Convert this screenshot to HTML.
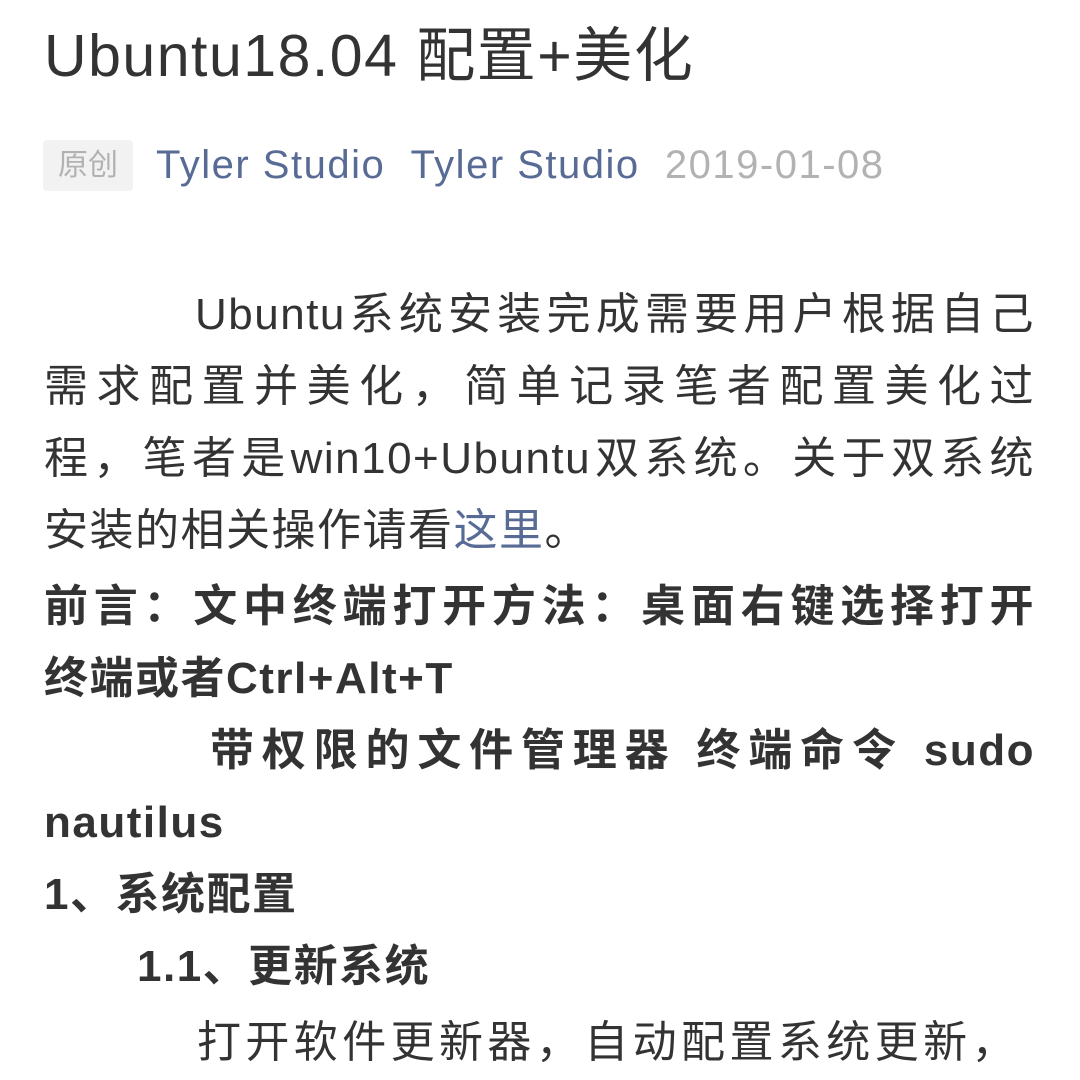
<!DOCTYPE html>
<html><head><meta charset="utf-8"><style>
html,body{margin:0;padding:0;background:#fff;width:1080px;height:1080px;overflow:hidden}
body{font-family:"Liberation Sans","Noto Sans CJK SC",sans-serif;color:#333}
.l{position:absolute;left:44px;width:991px;height:72px;line-height:72px;font-size:44px;white-space:nowrap;text-align:justify;text-align-last:justify;letter-spacing:1.5px}
.n{text-align-last:left}
.b{font-weight:bold}
a{color:#576b95;text-decoration:none}
</style></head><body>
<div style="position:absolute;left:44px;top:20px;font-size:59px;line-height:72px;color:#333;letter-spacing:1.5px;white-space:nowrap">Ubuntu18.04 配置+美化</div>
<div style="position:absolute;left:43px;top:140px;width:90px;height:51px;background:#f2f2f2;border-radius:4px;color:#b2b2b2;font-size:30px;line-height:51px;text-align:center">原创</div>
<div style="position:absolute;left:156px;top:140px;font-size:40px;letter-spacing:1.5px;line-height:51px;white-space:nowrap"><span style="color:#576b95">Tyler Studio</span>&nbsp;&nbsp;<span style="color:#576b95">Tyler Studio</span>&nbsp;&nbsp;<span style="color:#b2b2b2">2019-01-08</span></div>
<div class="l" style="top:279px;left:195px;width:840px">Ubuntu系统安装完成需要用户根据自己</div>
<div class="l" style="top:351px">需求配置并美化，简单记录笔者配置美化过</div>
<div class="l" style="top:423px">程，笔者是win10+Ubuntu双系统。关于双系统</div>
<div class="l n" style="top:495px">安装的相关操作请看<a>这里</a>。</div>
<div class="l b" style="top:571px">前言：文中终端打开方法：桌面右键选择打开</div>
<div class="l b n" style="top:643px">终端或者Ctrl+Alt+T</div>
<div class="l b" style="top:715px;left:210px;width:825px">带权限的文件管理器 终端命令 sudo</div>
<div class="l b n" style="top:787px">nautilus</div>
<div class="l b n" style="top:859px">1、系统配置</div>
<div class="l b n" style="top:931px;left:137px">1.1、更新系统</div>
<div class="l" style="top:1007px;left:197px;width:820px">打开软件更新器，自动配置系统更新，</div>
</body></html>
